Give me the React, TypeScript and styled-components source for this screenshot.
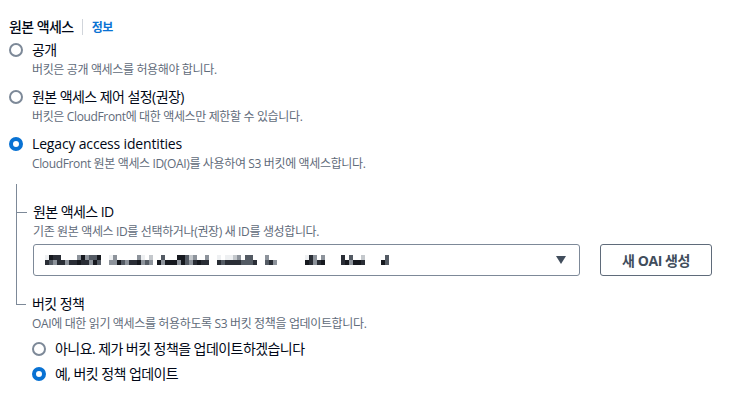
import React from "react";
import styled, { createGlobalStyle } from "styled-components";

const GlobalStyle = createGlobalStyle`
  body {
    margin: 0;
    background: #ffffff;
    font-family: "Open Sans", "Noto Sans CJK KR", sans-serif;
    color: #000716;
  }
`;

// mosaic blocks standing in for the redacted OAI name
const MASK_SHADES = [
  "#16191f", "#2a2e36", "#545b64", "#8d939b", "#c4c8cc", "#eef0f2",
];

const buildMask = () => {
  const blocks: { x: number; y: number; c: string }[] = [];
  let seed = 17;
  const rand = () => {
    seed = (seed * 9301 + 49297) % 233280;
    return seed / 233280;
  };
  const gaps = [14, 15, 27, 41, 42, 53, 54, 58, 59, 60, 61, 62, 63, 64, 70, 71, 72, 73, 80, 81, 82, 83];
  for (let col = 0; col < 86; col++) {
    if (gaps.includes(col)) continue;
    for (let row = 0; row < 2; row++) {
      const r = rand();
      if (row === 0 && r < 0.35) continue;
      const shade = MASK_SHADES[Math.floor(rand() * (row === 0 ? 6 : 4))];
      blocks.push({ x: col * 4, y: row * 5, c: shade });
    }
  }
  return blocks;
};

const maskBlocks = buildMask();

const Page = styled.div`
  padding: 17px 9px 20px 9px;
  width: 756px;
  box-sizing: border-box;
`;

const FieldHeader = styled.div`
  display: flex;
  align-items: center;
  height: 20px;
`;

const FieldLabel = styled.span`
  font-size: 14px;
  line-height: 20px;
  font-weight: 500;
  letter-spacing: -0.04em;
  color: #000716;
`;

const Divider = styled.span`
  width: 1px;
  height: 16px;
  background: #d1d5db;
  margin: 0 9px 0 8px;
`;

const InfoLink = styled.a`
  font-size: 12px;
  font-weight: 700;
  letter-spacing: -0.03em;
  color: #0972d3;
  text-decoration: none;
`;

const RadioList = styled.div<{ $gap: number }>`
  display: flex;
  flex-direction: column;
  gap: ${({ $gap }) => $gap}px;
`;

const RadioRow = styled.label`
  display: flex;
  align-items: flex-start;
  gap: 9px;
`;

const Circle = styled.span<{ $checked?: boolean }>`
  flex: none;
  box-sizing: border-box;
  width: 14px;
  height: 14px;
  margin-top: 3px;
  border-radius: 50%;
  border: ${({ $checked }) =>
    $checked ? "4.5px solid #0972d3" : "2px solid #7d8998"};
  background: #ffffff;
`;

const RadioTexts = styled.div`
  display: flex;
  flex-direction: column;
  gap: 2px;
`;

const RadioTitle = styled.span<{ $latin?: boolean }>`
  display: block;
  font-size: 14px;
  line-height: 20px;
  letter-spacing: ${({ $latin }) => ($latin ? "-0.012em" : "-0.04em")};
  color: #000716;
`;

const Description = styled.span`
  display: block;
  font-size: 12px;
  line-height: 16px;
  letter-spacing: -0.03em;
  color: #5f6b7a;
`;

const TopList = styled(RadioList)`
  margin-top: 3px;
`;

const Tree = styled.div`
  margin-left: 7px;
  margin-top: 12px;
  padding-top: 18px;
  border-left: 1px solid #7d8998;
`;

const TreeBranch = styled.div<{ $last?: boolean }>`
  position: relative;
  padding-left: 16px;
  padding-bottom: ${({ $last }) => ($last ? 0 : 18)}px;
  margin-left: ${({ $last }) => ($last ? -1 : 0)}px;

  &::before {
    content: "";
    position: absolute;
    left: 0;
    top: ${({ $last }) => ($last ? -1 : 10)}px;
    width: ${({ $last }) => ($last ? 9 : 10)}px;
    height: ${({ $last }) => ($last ? 11 : 0)}px;
    border-bottom: 1px solid #7d8998;
    border-left: ${({ $last }) => ($last ? "1px solid #7d8998" : "none")};
  }
`;

const TreeFoot = styled.div`
  margin-left: 8px;
`;

const SubLabel = styled.div`
  font-size: 14px;
  line-height: 20px;
  letter-spacing: -0.04em;
  color: #000716;
  margin-bottom: 2px;
`;

const ControlRow = styled.div`
  display: flex;
  align-items: center;
  gap: 20px;
  margin-top: 4px;
`;

const Select = styled.div`
  box-sizing: border-box;
  width: 547px;
  height: 32px;
  border: 1px solid #7d8998;
  border-radius: 3px;
  display: flex;
  align-items: center;
  justify-content: space-between;
  padding: 0 11px 0 11px;
`;

const Caret = styled.span`
  width: 0;
  height: 0;
  border-left: 5px solid transparent;
  border-right: 5px solid transparent;
  border-top: 8px solid #414d5c;
  margin-right: 2px;
`;

const Button = styled.button`
  box-sizing: border-box;
  width: 112px;
  height: 32px;
  border: 1px solid #5f6b7a;
  border-radius: 3px;
  background: #ffffff;
  font-family: "Open Sans", "Noto Sans CJK KR", sans-serif;
  font-size: 14px;
  font-weight: 700;
  letter-spacing: -0.03em;
  color: #414d5c;
`;

const NestedList = styled(RadioList)`
  margin-top: 7px;
`;

const App = () => {
  return (
    <>
      <GlobalStyle />
      <Page>
        <FieldHeader>
          <FieldLabel>원본 액세스</FieldLabel>
          <Divider />
          <InfoLink>정보</InfoLink>
        </FieldHeader>
        <TopList $gap={9}>
          <RadioRow>
            <Circle />
            <RadioTexts>
              <RadioTitle>공개</RadioTitle>
              <Description>버킷은 공개 액세스를 허용해야 합니다.</Description>
            </RadioTexts>
          </RadioRow>
          <RadioRow>
            <Circle />
            <RadioTexts>
              <RadioTitle>원본 액세스 제어 설정(권장)</RadioTitle>
              <Description>버킷은 CloudFront에 대한 액세스만 제한할 수 있습니다.</Description>
            </RadioTexts>
          </RadioRow>
          <RadioRow>
            <Circle $checked />
            <RadioTexts>
              <RadioTitle $latin>Legacy access identities</RadioTitle>
              <Description>
                CloudFront 원본 액세스 ID(OAI)를 사용하여 S3 버킷에 액세스합니다.
              </Description>
            </RadioTexts>
          </RadioRow>
        </TopList>
        <Tree>
          <TreeBranch>
            <SubLabel>원본 액세스 ID</SubLabel>
            <Description>
              기존 원본 액세스 ID를 선택하거나(권장) 새 ID를 생성합니다.
            </Description>
            <ControlRow>
              <Select>
                <svg width="344" height="10" viewBox="0 0 344 10">
                  {maskBlocks.map((b, i) => (
                    <rect key={i} x={b.x} y={b.y} width={4} height={5} fill={b.c} />
                  ))}
                </svg>
                <Caret />
              </Select>
              <Button>새 OAI 생성</Button>
            </ControlRow>
          </TreeBranch>
        </Tree>
        <TreeFoot>
          <TreeBranch $last>
            <SubLabel>버킷 정책</SubLabel>
            <Description>
              OAI에 대한 읽기 액세스를 허용하도록 S3 버킷 정책을 업데이트합니다.
            </Description>
            <NestedList $gap={5}>
              <RadioRow>
                <Circle />
                <RadioTitle>아니요. 제가 버킷 정책을 업데이트하겠습니다</RadioTitle>
              </RadioRow>
              <RadioRow>
                <Circle $checked />
                <RadioTitle>예, 버킷 정책 업데이트</RadioTitle>
              </RadioRow>
            </NestedList>
          </TreeBranch>
        </TreeFoot>
      </Page>
    </>
  );
};

export default App;
